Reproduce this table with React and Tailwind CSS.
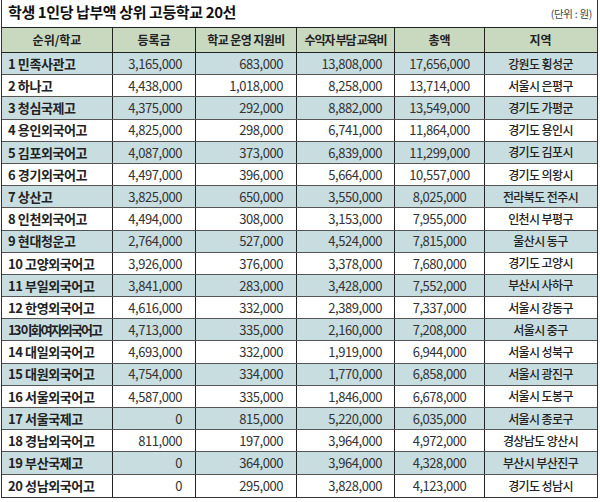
import React from "react";

// 학생 1인당 납부액 상위 20개 고교 (단위: 원)
const ROWS = [
  ["1 민족사관고", "3,165,000", "683,000", "13,808,000", "17,656,000", "강원도 횡성군"],
  ["2 하나고", "4,438,000", "1,018,000", "8,258,000", "13,714,000", "서울시 은평구"],
  ["3 청심국제고", "4,375,000", "292,000", "8,882,000", "13,549,000", "경기도 가평군"],
  ["4 용인외국어고", "4,825,000", "298,000", "6,741,000", "11,864,000", "경기도 용인시"],
  ["5 김포외국어고", "4,087,000", "373,000", "6,839,000", "11,299,000", "경기도 김포시"],
  ["6 경기외국어고", "4,497,000", "396,000", "5,664,000", "10,557,000", "경기도 의왕시"],
  ["7 상산고", "3,825,000", "650,000", "3,550,000", "8,025,000", "전라북도 전주시"],
  ["8 인천외국어고", "4,494,000", "308,000", "3,153,000", "7,955,000", "인천시 부평구"],
  ["9 현대청운고", "2,764,000", "527,000", "4,524,000", "7,815,000", "울산시 동구"],
  ["10 고양외국어고", "3,926,000", "376,000", "3,378,000", "7,680,000", "경기도 고양시"],
  ["11 부일외국어고", "3,841,000", "283,000", "3,428,000", "7,552,000", "부산시 사하구"],
  ["12 한영외국어고", "4,616,000", "332,000", "2,389,000", "7,337,000", "서울시 강동구"],
  ["13 이화여자외국어고", "4,713,000", "335,000", "2,160,000", "7,208,000", "서울시 중구"],
  ["14 대일외국어고", "4,693,000", "332,000", "1,919,000", "6,944,000", "서울시 성북구"],
  ["15 대원외국어고", "4,754,000", "334,000", "1,770,000", "6,858,000", "서울시 광진구"],
  ["16 서울외국어고", "4,587,000", "335,000", "1,846,000", "6,678,000", "서울시 도봉구"],
  ["17 서울국제고", "0", "815,000", "5,220,000", "6,035,000", "서울시 종로구"],
  ["18 경남외국어고", "811,000", "197,000", "3,964,000", "4,972,000", "경상남도 양산시"],
  ["19 부산국제고", "0", "364,000", "3,964,000", "4,328,000", "부산시 부산진구"],
  ["20 성남외국어고", "0", "295,000", "3,828,000", "4,123,000", "경기도 성남시"],
];

const FONT = { fontFamily: '"Noto Sans CJK KR", "Noto Sans", sans-serif' };

function Row({ r, i }) {
  const bg = i % 2 === 0 ? "bg-[#c8dde0]" : "bg-white";
  const last = i === ROWS.length - 1;
  return (
    <div className={"flex h-[22.2px] text-[#222] " + bg + (last ? "" : " border-b border-[#555]")}>
      <div className="flex w-[111px] items-center border-r border-[#222] pl-[6px] text-[13px] font-bold tracking-[-0.4px] whitespace-nowrap overflow-hidden">
        {i === 12 ? <span className="tracking-[-1.9px]">{r[0]}</span> : r[0]}
      </div>
      <div className="flex w-[83px] items-center justify-end border-r border-[#222] pr-[13px] text-[13px] tracking-[-0.45px] text-[#333]">
        {r[1]}
      </div>
      <div className="flex w-[101px] items-center justify-end border-r border-[#222] pr-[13px] text-[13px] tracking-[-0.45px] text-[#333]">
        {r[2]}
      </div>
      <div className="flex w-[98px] items-center justify-end border-r border-[#222] pr-[12px] text-[13px] tracking-[-0.45px] text-[#333]">
        {r[3]}
      </div>
      <div className="flex w-[90px] items-center justify-center border-r border-[#222] text-[13px] tracking-[-0.45px] text-[#333]">
        {r[4]}
      </div>
      <div className="flex w-[111px] items-center justify-center text-[12px] font-medium tracking-[-0.6px]">
        {r[5]}
      </div>
    </div>
  );
}

export default function App() {
  return (
    <div className="h-[502px] w-[600px] bg-white" style={FONT}>
      <div className="ml-[1px] flex w-[597px] flex-col border-x border-b border-[#333]">
        <div className="flex h-[27px] items-start justify-between">
          <h1 className="pt-[1px] pl-[6px] text-[15px] font-bold tracking-[-0.4px] text-[#111]">
            학생 1인당 납부액 상위 고등학교 20선
          </h1>
          <span className="pt-[6px] pr-[5px] text-[10.5px] tracking-[-0.3px] text-[#444]">(단위 : 원)</span>
        </div>
        <div className="flex h-[26px] border-y border-[#222] bg-[#c9d9c0] text-[12px] font-bold text-[#222]">
          <div className="flex w-[111px] items-center justify-center border-r border-[#222]">순위/학교</div>
          <div className="flex w-[83px] items-center justify-center border-r border-[#222]">등록금</div>
          <div className="flex w-[101px] items-center justify-center border-r border-[#222] tracking-[-0.6px]">
            학교 운영 지원비
          </div>
          <div className="flex w-[98px] items-center justify-center border-r border-[#222] tracking-[-1.2px]">
            수익자 부담 교육비
          </div>
          <div className="flex w-[90px] items-center justify-center border-r border-[#222]">총액</div>
          <div className="flex w-[111px] items-center justify-center">지역</div>
        </div>
        {ROWS.map((r, i) => (
          <Row key={i} r={r} i={i} />
        ))}
      </div>
    </div>
  );
}
